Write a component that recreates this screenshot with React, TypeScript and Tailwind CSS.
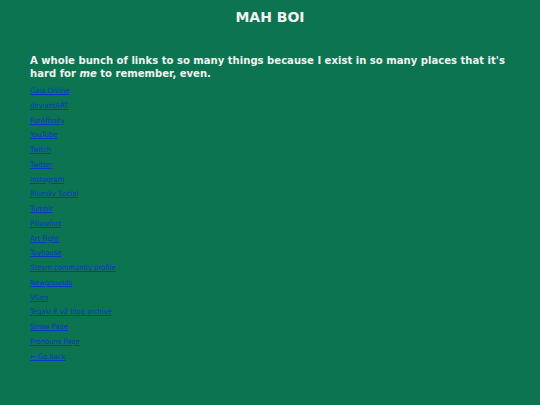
import React from "react";

const links = [
  "Gaia Online",
  "deviantART",
  "FurAffinity",
  "YouTube",
  "Twitch",
  "Twitter",
  "Instagram",
  "Bluesky Social",
  "Tumblr",
  "Pillowfort",
  "Art Fight",
  "Toyhouse",
  "Steam community profile",
  "Newgrounds",
  "VGen",
  "Tegaki E v2 blog archive",
  "Straw Page",
  "Pronouns Page",
  "← Go back",
];

export default function App() {
  return (
    <div
      className="min-h-[405px] w-full bg-[#0c7450] text-[#f2f2f2] px-[30px] pt-[9px]"
      style={{ fontFamily: '"DejaVu Sans", Verdana, sans-serif' }}
    >
      <h1 className="text-center font-bold text-[14px] leading-[17px]">MAH BOI</h1>
      <h2
        className="mt-[28px] font-bold text-[11.2px] leading-[13px]"
        style={{ fontFamily: '"DejaVu Sans Condensed", "DejaVu Sans", sans-serif' }}
      >
        A whole bunch of links to so many things because I exist in so many places that it's
        hard for <em>me</em> to remember, even.
      </h2>
      <ul
        className="mt-[6px] flex flex-col"
        style={{ fontFamily: '"DejaVu Sans Condensed", "DejaVu Sans", sans-serif' }}
      >
        {links.map((l) => (
          <li key={l} className="h-[14.78px] text-[7.5px] leading-[10px]">
            <a href="#" className="text-[#0b36c8] underline">
              {l}
            </a>
          </li>
        ))}
      </ul>
    </div>
  );
}
